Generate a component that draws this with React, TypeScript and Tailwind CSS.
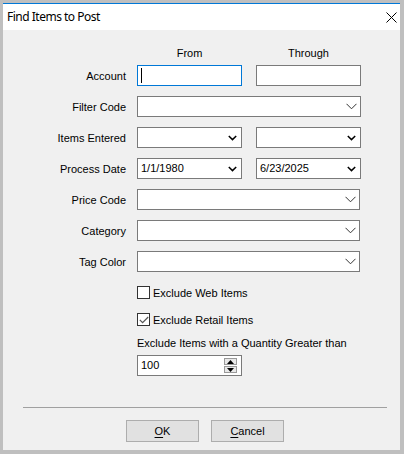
import React from "react";

const FONT = "font-['Liberation_Sans',Arial,sans-serif]";

function Chevron({ bold }: { bold?: boolean }) {
  if (bold) {
    return (
      <svg width="9" height="6" viewBox="0 0 9 6" className="shrink-0">
        <path d="M0.8 1 L4.5 4.6 L8.2 1" fill="none" stroke="#000" strokeWidth="1.5" />
      </svg>
    );
  }
  return (
    <svg width="11" height="7" viewBox="0 0 11 7" className="shrink-0">
      <path d="M0.5 0.8 L5.5 5.8 L10.5 0.8" fill="none" stroke="#333" strokeWidth="1" />
    </svg>
  );
}

function TextBox({ focused }: { focused?: boolean }) {
  return (
    <div
      className={`flex h-[21px] w-[105px] items-center border bg-white pl-[3px] ${
        focused ? "border-[#0078d7]" : "border-[#7a7a7a]"
      }`}
    >
      {focused && <div className="h-[15px] w-px bg-black" />}
    </div>
  );
}

function DateBox({ value }: { value?: string }) {
  return (
    <div className="flex h-[21px] w-[105px] items-center justify-between border border-[#7a7a7a] bg-white pl-[3px] pr-[4px]">
      <span className="leading-none">{value ?? ""}</span>
      <Chevron bold />
    </div>
  );
}

function Combo({ w }: { w: string }) {
  return (
    <div className={`flex h-[21px] ${w} items-center justify-end border border-[#7a7a7a] bg-white pr-[3px]`}>
      <Chevron />
    </div>
  );
}

function Row({ label, children }: { label: string; children: React.ReactNode }) {
  return (
    <div className="mt-[10px] flex h-[21px] items-center">
      <div className="w-[123px] pt-px text-right">{label}</div>
      <div className="ml-[11px] flex gap-[14px]">{children}</div>
    </div>
  );
}

function Check({ checked, label, className }: { checked?: boolean; label: string; className: string }) {
  return (
    <div className={`flex h-[13px] items-center pl-[134px] ${className}`}>
      <div className="flex h-[13px] w-[13px] items-center justify-center border border-[#333] bg-white">
        {checked && (
          <svg width="10" height="8" viewBox="0 0 10 8">
            <path d="M0.8 3.8 L3.6 6.6 L9.2 1" fill="none" stroke="#555" strokeWidth="1.2" />
          </svg>
        )}
      </div>
      <span className="ml-[3px] whitespace-nowrap pt-px">{label}</span>
    </div>
  );
}

function Button({ accel, rest }: { accel: string; rest: string }) {
  return (
    <div className="flex h-[22px] w-[73px] items-center justify-center border border-[#adadad] bg-[#e1e1e1]">
      <span>
        <span className="underline underline-offset-2">{accel}</span>
        {rest}
      </span>
    </div>
  );
}

export default function App() {
  return (
    <div className={`h-[454px] w-[404px] bg-[#bfbfbf] pb-[4px] pl-[3px] pr-[4px] pt-[3px] text-[11px] text-black ${FONT}`}>
      <div className="flex h-full flex-col border-t border-[#0078d7] bg-[#f0f0f0]">
        <div className="flex h-[26px] items-center justify-between bg-white pl-[4px] pr-[3px]">
          <span className="font-['Noto_Sans',sans-serif] text-[12px] tracking-[-0.5px]">Find Items to Post</span>
          <svg width="11" height="11" viewBox="0 0 11 11">
            <path d="M0.5 0.5 L10.5 10.5 M10.5 0.5 L0.5 10.5" stroke="#000" strokeWidth="1" />
          </svg>
        </div>

        <div className="mt-[15px] flex h-[16px] items-center pl-[134px]">
          <div className="w-[105px] text-center">From</div>
          <div className="ml-[14px] w-[105px] text-center">Through</div>
        </div>

        <div className="mt-[-6px]">
          <Row label="Account">
            <TextBox focused />
            <TextBox />
          </Row>
          <Row label="Filter Code">
            <Combo w="w-[224px]" />
          </Row>
          <Row label="Items Entered">
            <DateBox />
            <DateBox />
          </Row>
          <Row label="Process Date">
            <DateBox value="1/1/1980" />
            <DateBox value="6/23/2025" />
          </Row>
          <Row label="Price Code">
            <Combo w="w-[223px]" />
          </Row>
          <Row label="Category">
            <Combo w="w-[223px]" />
          </Row>
          <Row label="Tag Color">
            <Combo w="w-[223px]" />
          </Row>
        </div>

        <Check label="Exclude Web Items" className="mt-[14px]" />
        <Check checked label="Exclude Retail Items" className="mt-[14px]" />

        <div className="mt-[9px] flex h-[16px] items-center pl-[134px]">Exclude Items with a Quantity Greater than</div>

        <div className="mt-[4px] pl-[134px]">
          <div className="flex h-[21px] w-[105px] items-center justify-between border border-[#7a7a7a] bg-white pl-[3px] pr-[4px]">
            <span className="leading-none">100</span>
            <div className="flex h-[15px] w-[13px] flex-col gap-px">
              <div className="flex flex-1 items-center justify-center border border-[#999] bg-[#e8e8e8]">
                <svg width="7" height="4" viewBox="0 0 7 4">
                  <path d="M0 4 L3.5 0 L7 4 Z" fill="#000" />
                </svg>
              </div>
              <div className="flex flex-1 items-center justify-center border border-[#999] bg-[#e8e8e8]">
                <svg width="7" height="4" viewBox="0 0 7 4">
                  <path d="M0 0 L3.5 4 L7 0 Z" fill="#000" />
                </svg>
              </div>
            </div>
          </div>
        </div>

        <div className="ml-[20px] mt-[31px] h-px w-[364px] bg-[#a0a0a0]" />

        <div className="mt-[12px] flex gap-[12px] pl-[123px]">
          <Button accel="O" rest="K" />
          <Button accel="C" rest="ancel" />
        </div>
      </div>
    </div>
  );
}
